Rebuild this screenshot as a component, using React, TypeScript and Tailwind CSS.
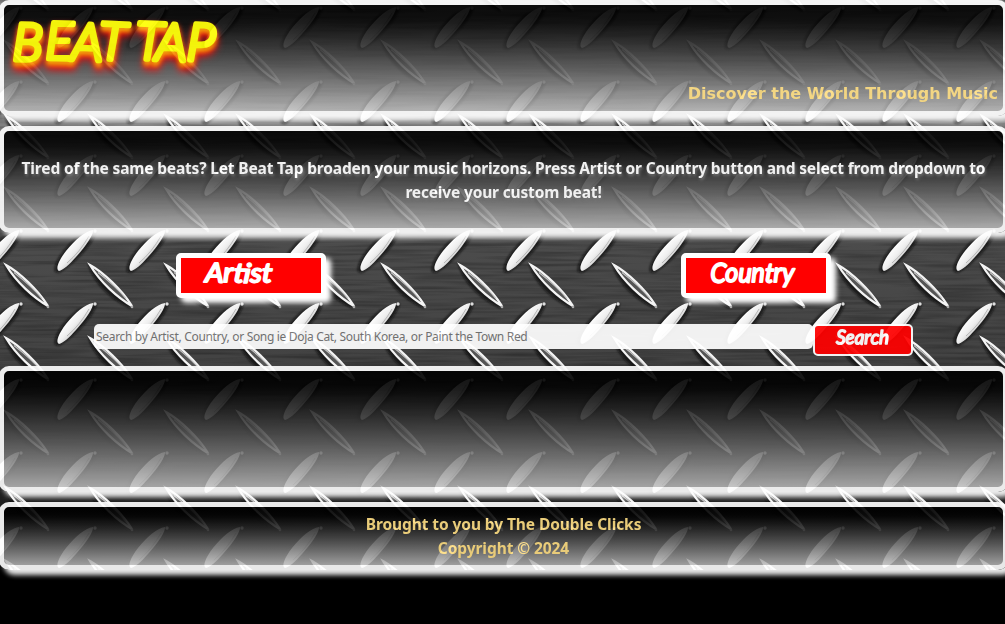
import React from "react";

const fatX = [-17, 57, 129, 204, 283, 360, 434, 506, 580, 652, 727, 805, 882, 956];
const fatY = [-25, 48, 122, 196, 271, 344, 420, 493, 568];
const thinX = [5, 89, 165, 237, 311, 382, 459, 530, 613, 688, 761, 837, 905, 981];
const thinY = [-33, 41, 115, 188, 264, 337, 411, 487, 560];

function DiamondPlate() {
  return (
    <svg className="absolute inset-0" width="1005" height="570" viewBox="0 0 1005 570" aria-hidden="true">
      <defs>
        <linearGradient id="metal" x1="0" y1="0" x2="0" y2="1">
          <stop offset="0" stopColor="#909090" />
          <stop offset="0.22" stopColor="#808080" />
          <stop offset="0.42" stopColor="#4c4c4c" />
          <stop offset="0.65" stopColor="#424242" />
          <stop offset="0.85" stopColor="#282828" />
          <stop offset="1" stopColor="#050505" />
        </linearGradient>
        <linearGradient id="bar" x1="0.3" y1="0.3" x2="0.7" y2="0.7">
          <stop offset="0.1" stopColor="#fff" />
          <stop offset="0.5" stopColor="#efefef" />
          <stop offset="0.95" stopColor="#bdbdbd" />
        </linearGradient>
        <filter id="brushed" x="0" y="0" width="100%" height="100%">
          <feTurbulence type="fractalNoise" baseFrequency="0.012 0.3" numOctaves="2" seed="4" />
          <feColorMatrix values="0 0 0 0 0  0 0 0 0 0  0 0 0 0 0  1.6 0 0 0 -0.62" />
        </filter>
        <filter id="soft" x="-30%" y="-30%" width="160%" height="160%">
          <feGaussianBlur stdDeviation="1.3" />
        </filter>
        <g id="fat">
          <path d="M-2 1C-5-6 6-23 20-34L40-41C37-26 15-5 2 2Z" fill="#0c0c0c" opacity=".7" filter="url(#soft)" />
          <path d="M2 0C-2-2 2-11 9-20C18-31 28-40 36-41C37-37 29-25 19-14C12-6 6-1 2 0Z" fill="url(#bar)" />
          <path d="M10-8Q23-19 32-35" fill="none" stroke="#aaa" strokeWidth=".8" />
          <circle cx="38" cy="-40" r="1.7" fill="#ddd" />
        </g>
        <g id="thin">
          <path d="M-1-1C1 13 17 34 42 45L39 35Z" fill="#0c0c0c" opacity=".75" filter="url(#soft)" />
          <path d="M1 1C14 8 33 26 43 42C29 34 11 18 1 1Z" fill="#555" stroke="#f4f4f4" strokeWidth="2.2" />
          <path d="M9 8.5C20 17 29 25 37 34.500" stroke="#c4c4c4" strokeWidth="1.1" fill="none" />
          <circle cx="43" cy="43" r="1.3" fill="#aaa" />
        </g>
      </defs>
      <rect width="1005" height="570" fill="url(#metal)" />
      <rect width="1005" height="570" filter="url(#brushed)" opacity=".35" />
      {fatY.map((y) => fatX.map((x) => <use key={`f${x}-${y}`} href="#fat" x={x} y={y} />))}
      {thinY.map((y) => thinX.map((x) => <use key={`t${x}-${y}`} href="#thin" x={x} y={y} />))}
    </svg>
  );
}

const panel =
  "-ml-px w-[1009px] shrink-0 rounded-[10px] border-[5px] border-white bg-linear-to-b from-black to-[#bcbcbceb] opacity-[.91] shadow-[5px_5px_5px_white]";
const bodyFont = "font-['Noto_Sans','Open_Sans',sans-serif]";

type MarkerProps = {
  text: string;
  width: number;
  height: number;
  size: number;
  baseline: number;
  stroke: number;
  length: number;
  tilt: string;
};

function Marker({ text, width, height, size, baseline, stroke, length, tilt }: MarkerProps) {
  return (
    <svg className="shrink-0 overflow-visible font-['Lato',sans-serif] italic" width={width} height={height}>
      <text
        x="1"
        y={baseline}
        fontSize={size}
        textLength={length}
        lengthAdjust="spacingAndGlyphs"
        rotate={tilt}
        fill="#fff"
        stroke="#fff"
        strokeWidth={stroke}
        strokeLinejoin="round"
      >
        {text}
      </text>
    </svg>
  );
}

export default function App() {
  return (
    <div className={`relative h-[624px] w-full overflow-hidden bg-black ${bodyFont}`}>
      <DiamondPlate />
      <div className="relative flex flex-col">
        <header className={`${panel} flex h-[116px] flex-col justify-between`}>
          <h1 className="h-[70px]">
            <svg
              className="overflow-visible font-['Lato',sans-serif] font-light italic [filter:drop-shadow(0_4px_2px_orange)_drop-shadow(0_4px_3px_red)]"
              width="220"
              height="70"
            >
              <text
                x="8 41 67 94 122 131 151 182"
                y="55 54 55 54 54 54 55 55"
                rotate="2 1 2 3 0 2 2 3"
                fontSize="52"
                fill="#ff0"
                stroke="#ff0"
                strokeWidth="4.6"
                strokeLinejoin="round"
              >
                BEAT TAP
              </text>
            </svg>
          </h1>
          <p className="mr-[5px] pb-1 text-right font-['DejaVu_Sans',sans-serif] text-[16px] leading-[26px] font-bold text-[#ffdf84]">
            Discover the World Through Music
          </p>
        </header>

        <section className={`${panel} mt-[10px] flex h-[107px] items-center justify-center text-center text-[15.5px] leading-6 font-bold tracking-[-0.165px] text-white [text-shadow:1px_2px_3px_#777]`}>
          <p className="whitespace-nowrap">
            Tired of the same beats? Let Beat Tap broaden your music horizons. Press Artist or Country button and select from dropdown to
            <br />
            receive your custom beat!
          </p>
        </section>

        <div className="mt-5 flex h-[45px] pl-[176px]">
          <button className="flex h-[45px] w-[150px] rounded-[5px] border-[5px] border-white bg-[red] pl-[23px] shadow-[5px_5px_5px_white]">
            <Marker text="Artist" width={70} height={35} size={27} baseline={24} stroke={2} length={67} tilt="2 0 4 0 3 2" />
          </button>
          <button className="ml-[355px] flex h-[45px] w-[150px] rounded-[5px] border-[5px] border-white bg-[red] pl-[23px] shadow-[5px_5px_5px_white]">
            <Marker text="Country" width={86} height={35} size={27} baseline={24} stroke={2} length={84} tilt="3 0 2 0 4 0 2" />
          </button>
        </div>

        <form className="mt-[26px] flex h-8 pl-[94px] opacity-[.93]" onSubmit={(e) => e.preventDefault()}>
          <input
            className="h-[25px] w-[719px] rounded-[5px] bg-white px-[2px] text-[12px] tracking-[-0.32px] text-black placeholder:text-[#757575]"
            placeholder="Search by Artist, Country, or Song ie Doja Cat, South Korea, or Paint the Town Red"
          />
          <button className="flex h-8 w-[100px] rounded-[5px] border-2 border-white bg-[red] pl-[20px]">
            <Marker text="Search" width={54} height={28} size={20} baseline={18} stroke={1.6} length={53} tilt="2 0 3 0 2 0" />
          </button>
        </form>

        <section className={`${panel} mt-[10px] h-[126px]`} />

        <footer className={`${panel} mt-[10px] flex h-[68px] flex-col items-center justify-center text-[15.5px] leading-6 font-bold tracking-[-0.08px] text-[#ffdf84]`}>
          <p>Brought to you by The Double Clicks</p>
          <p>Copyright © 2024</p>
        </footer>
      </div>
    </div>
  );
}
